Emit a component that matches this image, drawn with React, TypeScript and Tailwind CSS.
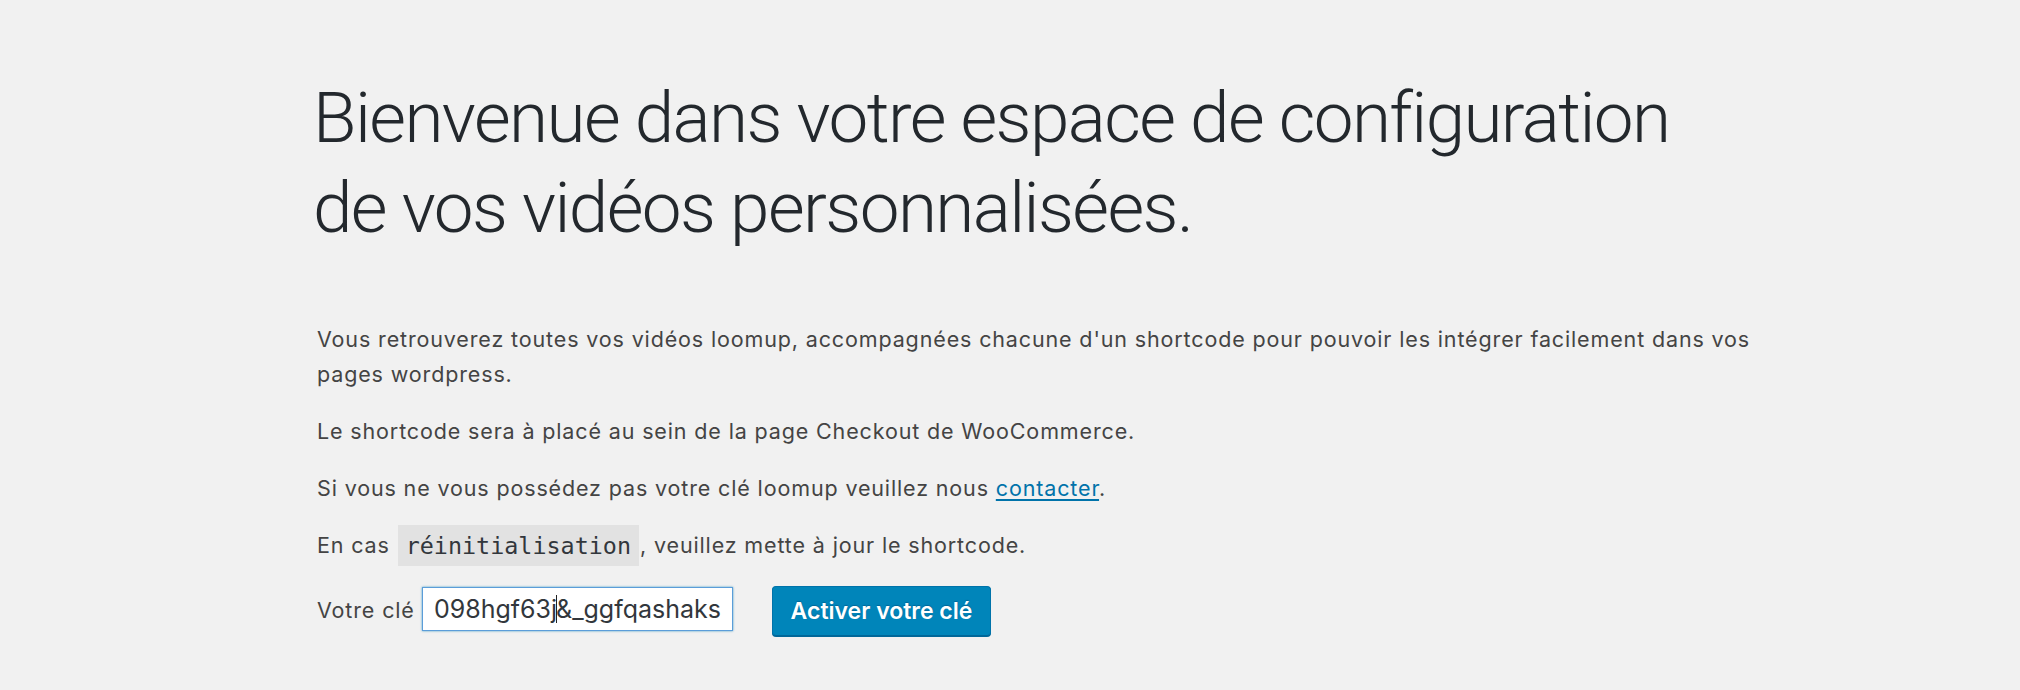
export default function App() {
  return (
    <div className="min-h-[690px] bg-[#f1f1f1] pl-[317px] pt-[73px]">
      <h1 className="-ml-[4px] whitespace-nowrap font-['Roboto',sans-serif] text-[71px] font-light leading-[90px] tracking-[-1.6px] text-[#23282d]">
        Bienvenue dans votre espace de configuration
        <br />
        de vos vidéos personnalisées.
      </h1>
      <div className="mt-[69px] whitespace-nowrap font-['Inter',sans-serif] text-[21.5px] leading-[35px] tracking-[0.86px] text-[#444]">
        <p>
          Vous retrouverez toutes vos vidéos loomup, accompagnées chacune d'un shortcode pour pouvoir les intégrer facilement dans vos
          <br />
          pages wordpress.
        </p>
        <p className="mt-[22px]">Le shortcode sera à placé au sein de la page Checkout de WooCommerce.</p>
        <p className="mt-[22px]">
          Si vous ne vous possédez pas votre clé loomup veuillez nous{' '}
          <a href="#" className="text-[#0073aa] underline underline-offset-[3px]">
            contacter
          </a>
          .
        </p>
        <p className="mt-[22px]">
          En cas{' '}
          <code className="mx-[1px] bg-[#e2e2e2] px-[8px] py-[6.5px] font-['DejaVu_Sans_Mono',monospace] text-[23.4px] tracking-normal text-[#32373c]">
            réinitialisation
          </code>
          , veuillez mette à jour le shortcode.
        </p>
        <div className="mt-[23px] flex items-start">
          <span className="mt-[7px] inline-block w-[105px]">Votre clé</span>
          <div className="mt-[1px] flex h-[44px] w-[311px] items-center border border-[#5b9dd9] bg-white px-[11px] text-[25px] tracking-normal text-[#32373c] shadow-[0_0_2px_rgba(30,140,190,0.8)]">
            <span>098hgf63j</span>
            <span className="-mx-[1px] inline-block h-[28px] w-[2px] bg-[#222]" />
            <span>&amp;_ggfqashaks</span>
          </div>
          <button className="ml-[39px] h-[50px] w-[219px] rounded-[4px] border border-[#0073aa] border-b-[#006799] bg-[#0085ba] text-[23px] font-semibold tracking-normal text-white shadow-[0_1px_0_#006799] [text-shadow:0_-1px_1px_#006799]">
            Activer votre clé
          </button>
        </div>
      </div>
    </div>
  );
}
